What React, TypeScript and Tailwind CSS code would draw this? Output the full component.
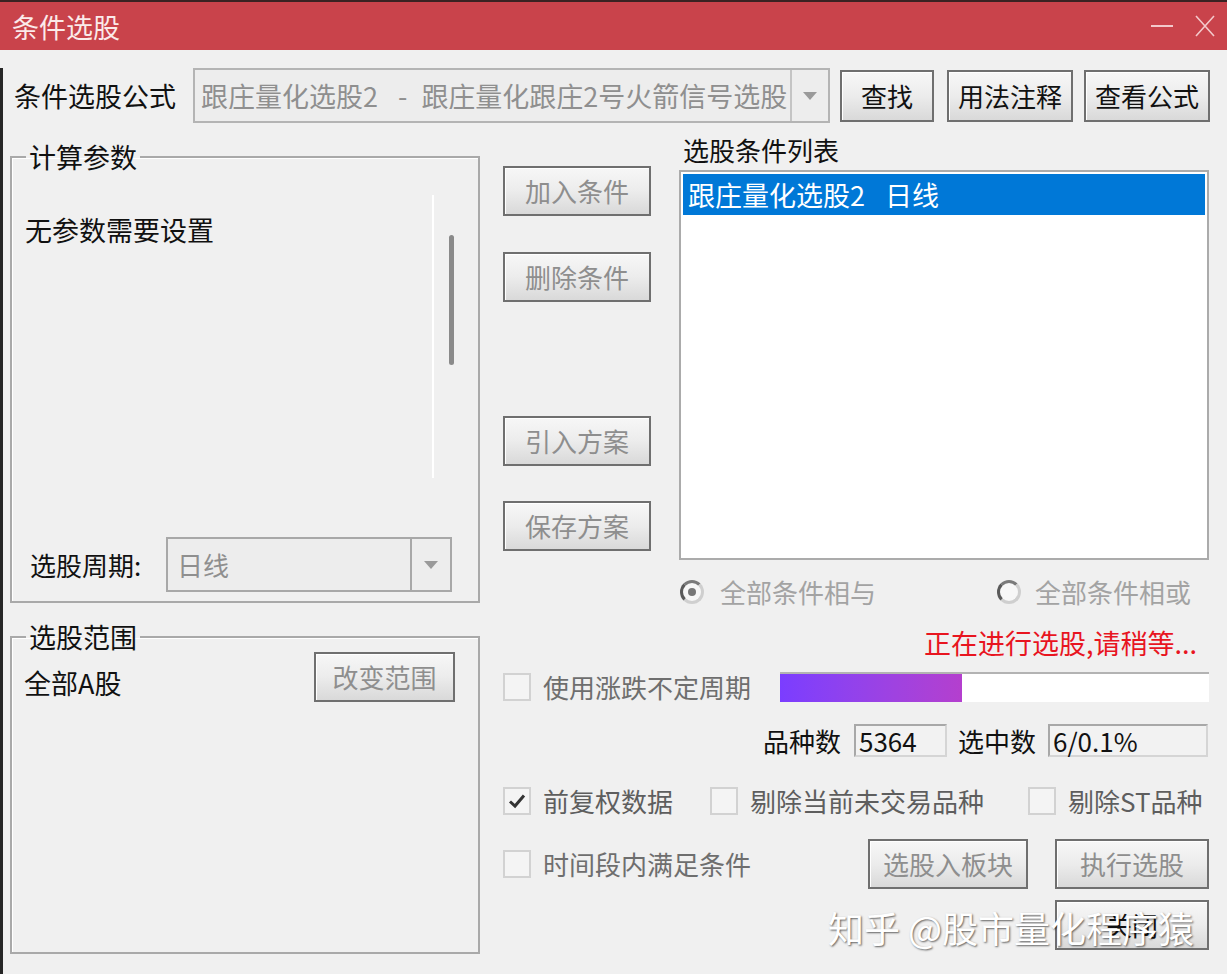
import React from 'react';

const WinButton: React.FC<{ label: string; className?: string; disabled?: boolean }> = ({ label, className = '', disabled }) => (
  <button
    className={`h-[50px] border-2 border-[#6f6f6f] bg-linear-to-b from-[#f7f7f7] via-[#ececec] to-[#d9d9d9] shadow-[inset_1px_1px_0_#ffffff] text-[26px] leading-none flex items-center justify-center ${disabled ? 'text-[#8e8e8e]' : 'text-[#111]'} ${className}`}
  >
    {label}
  </button>
);

const CheckBox: React.FC<{ checked?: boolean }> = ({ checked }) => (
  <span className="w-[28px] h-[28px] border-2 border-[#d2d2d2] bg-[#f4f4f4] flex items-center justify-center shrink-0">
    {checked && (
      <svg width="18" height="16" viewBox="0 0 18 16">
        <path d="M2 8.5 L7 13 L16 2.5" fill="none" stroke="#333" strokeWidth="3" />
      </svg>
    )}
  </span>
);

const Radio: React.FC<{ selected?: boolean }> = ({ selected }) => (
  <span className="w-[24px] h-[24px] rounded-full border-[3px] border-[#cfcfcf] border-l-[#5a5a5a] border-t-[#7a7a7a] bg-[#f7f7f7] flex items-center justify-center shrink-0">
    {selected && <span className="w-[8px] h-[8px] rounded-full bg-[#777]" />}
  </span>
);

const ComboArrow: React.FC = () => (
  <svg width="14" height="8" viewBox="0 0 14 8">
    <path d="M0 0 L14 0 L7 8 Z" fill="#9a9a9a" />
  </svg>
);

export default function App() {
  return (
    <div className="relative w-[1227px] h-[974px] bg-[#f0f0f0] overflow-hidden font-['Microsoft_YaHei','Noto_Sans_CJK_SC','Noto_Sans',sans-serif] text-[#111]">
      {/* title bar */}
      <div className="h-[50px] bg-[#c9434b] border-t-2 border-[#3a2222] flex items-center pl-[12px]">
        <span className="text-[27px] leading-none text-[#fbeaea]">条件选股</span>
        <div className="ml-auto flex items-center mr-[12px]">
          <svg width="22" height="4" viewBox="0 0 22 4" className="mr-[22px]">
            <rect x="0" y="1" width="22" height="2" fill="#f3c9cb" />
          </svg>
          <svg width="20" height="22" viewBox="0 0 20 22">
            <path d="M1 1 L19 21 M19 1 L1 21" stroke="#f3c9cb" strokeWidth="1.6" />
          </svg>
        </div>
      </div>

      <div className="border-l-[3px] border-[#262626] h-[924px]">
        {/* formula row */}
        <div className="mt-[18px] h-[55px] flex items-center">
          <span className="w-[190px] pl-[11px] text-[27px] leading-none">条件选股公式</span>
          <div className="w-[637px] h-[55px] border-2 border-[#b4b4b4] bg-[#ededed] flex items-center">
            <span className="flex-1 overflow-hidden whitespace-nowrap pl-[6px] text-[27px] leading-none text-[#8f8f8f]">
              跟庄量化选股2<span className="ml-[20px] mr-[14px]">-</span>跟庄量化跟庄2号火箭信号选股
            </span>
            <span className="w-[38px] h-full border-l-2 border-[#c4c4c4] flex items-center justify-center shrink-0">
              <ComboArrow />
            </span>
          </div>
          <WinButton label="查找" className="ml-[10px] w-[94px] h-[52px]" />
          <WinButton label="用法注释" className="ml-[13px] w-[126px] h-[52px]" />
          <WinButton label="查看公式" className="ml-[11px] w-[126px] h-[52px]" />
        </div>

        {/* main area */}
        <div className="mt-[7px] flex items-start">
          {/* left column */}
          <div className="ml-[7px] w-[470px] flex flex-col">
            <fieldset className="mt-[10px] h-[463px] border-2 border-[#a9a9a9] shadow-[inset_1px_1px_0_#ffffff] flex flex-col">
              <legend className="ml-[14px] px-[3px] text-[27px] leading-[34px]">计算参数</legend>
              <div className="h-[330px] flex items-start">
                <div className="w-[420px] pl-[13px] pt-[39px] text-[27px] leading-[34px]">无参数需要设置</div>
                <div className="w-[2px] h-[283px] mt-[21px] bg-white" />
                <div className="ml-[15px] w-[5px] h-[130px] mt-[61px] bg-[#8a8a8a] rounded-full" />
              </div>
              <div className="mt-[33px] flex items-center">
                <span className="w-[154px] pl-[18px] text-[26px] leading-none">选股周期:</span>
                <div className="w-[286px] h-[55px] border-2 border-[#a8a8a8] bg-[#ededed] flex items-center">
                  <span className="flex-1 pl-[9px] text-[26px] leading-none text-[#8f8f8f]">日线</span>
                  <span className="w-[40px] h-full border-l-2 border-[#a8a8a8] flex items-center justify-center">
                    <ComboArrow />
                  </span>
                </div>
              </div>
            </fieldset>

            <fieldset className="mt-[17px] h-[334px] border-2 border-[#a9a9a9] shadow-[inset_1px_1px_0_#ffffff]">
              <legend className="ml-[14px] px-[3px] text-[27px] leading-[34px]">选股范围</legend>
              <div className="-mt-[2px] flex items-start">
                <span className="pl-[12px] pt-[14px] text-[27px] leading-[34px]">全部A股</span>
                <WinButton label="改变范围" disabled className="ml-auto mr-[23px] w-[141px]" />
              </div>
            </fieldset>
          </div>

          {/* right area */}
          <div className="ml-[23px] w-[706px] flex flex-col">
            <div className="h-[430px] flex items-start">
              <div className="w-[148px] pt-[36px] flex flex-col">
                <WinButton label="加入条件" disabled className="w-[148px]" />
                <WinButton label="删除条件" disabled className="w-[148px] mt-[36px]" />
                <WinButton label="引入方案" disabled className="w-[148px] mt-[114px]" />
                <WinButton label="保存方案" disabled className="w-[148px] mt-[35px]" />
              </div>
              <div className="ml-[28px] w-[530px] flex flex-col">
                <div className="h-[40px] pt-[3px] pl-[4px] text-[26px] leading-[34px]">选股条件列表</div>
                <div className="h-[390px] border-2 border-[#ababab] bg-white p-[2px]">
                  <div className="h-[41px] bg-[#0078d7] text-white flex items-center pl-[5px] text-[27px] leading-none">
                    跟庄量化选股2<span className="ml-[20px]">日线</span>
                  </div>
                </div>
              </div>
            </div>

            <div className="mt-[12px] h-[40px] flex items-center text-[26px] leading-none text-[#a3a3a3]">
              <div className="w-[494px] pl-[177px] flex items-center">
                <Radio selected />
                <span className="ml-[16px]">全部条件相与</span>
              </div>
              <Radio />
              <span className="ml-[14px]">全部条件相或</span>
            </div>

            <div className="mt-[14px] h-[34px] pr-[12px] text-right text-[27px] leading-[34px] text-[#e8151f]">正在进行选股,请稍等...</div>

            <div className="mt-[12px] h-[30px] flex items-center">
              <CheckBox />
              <span className="ml-[12px] text-[26px] leading-none text-[#6e6e6e]">使用涨跌不定周期</span>
              <div className="ml-auto w-[429px] h-[30px] bg-white border-t-2 border-[#b3b3b3] flex">
                <div className="w-[182px] h-full bg-linear-to-r from-[#7b3dff] to-[#b43fce]" />
              </div>
            </div>

            <div className="mt-[22px] h-[33px] flex items-center justify-end text-[26px] leading-none">
              <span>品种数</span>
              <span className="ml-[13px] w-[93px] h-[33px] border-2 border-[#d5d5d5] border-t-[#a8a8a8] border-l-[#a8a8a8] bg-[#f2f2f2] flex items-center pl-[3px]">5364</span>
              <span className="ml-[11px]">选中数</span>
              <span className="ml-[12px] mr-[1px] w-[160px] h-[33px] border-2 border-[#d5d5d5] border-t-[#a8a8a8] border-l-[#a8a8a8] bg-[#f2f2f2] flex items-center pl-[3px]">6/0.1%</span>
            </div>

            <div className="mt-[29px] h-[30px] flex items-center text-[26px] leading-none text-[#5e5e5e]">
              <div className="w-[207px] flex items-center">
                <CheckBox checked />
                <span className="ml-[12px]">前复权数据</span>
              </div>
              <div className="w-[318px] flex items-center">
                <CheckBox />
                <span className="ml-[12px]">剔除当前未交易品种</span>
              </div>
              <CheckBox />
              <span className="ml-[12px]">剔除ST品种</span>
            </div>

            <div className="mt-[23px] h-[50px] flex items-center">
              <CheckBox />
              <span className="ml-[12px] text-[26px] leading-none text-[#6e6e6e]">时间段内满足条件</span>
              <WinButton label="选股入板块" disabled className="ml-auto w-[160px]" />
              <WinButton label="执行选股" disabled className="ml-[27px] w-[154px]" />
            </div>

            <div className="mt-[11px] flex justify-end">
              <WinButton label="关闭" className="w-[154px]" />
            </div>
          </div>
        </div>
      </div>

      {/* watermark */}
      <div className="absolute left-[828px] top-[905px] text-[36px] leading-[44px] text-white whitespace-pre [text-shadow:1px_1px_2px_rgba(0,0,0,0.6)]">知乎 @股市量化程序猿</div>
    </div>
  );
}
